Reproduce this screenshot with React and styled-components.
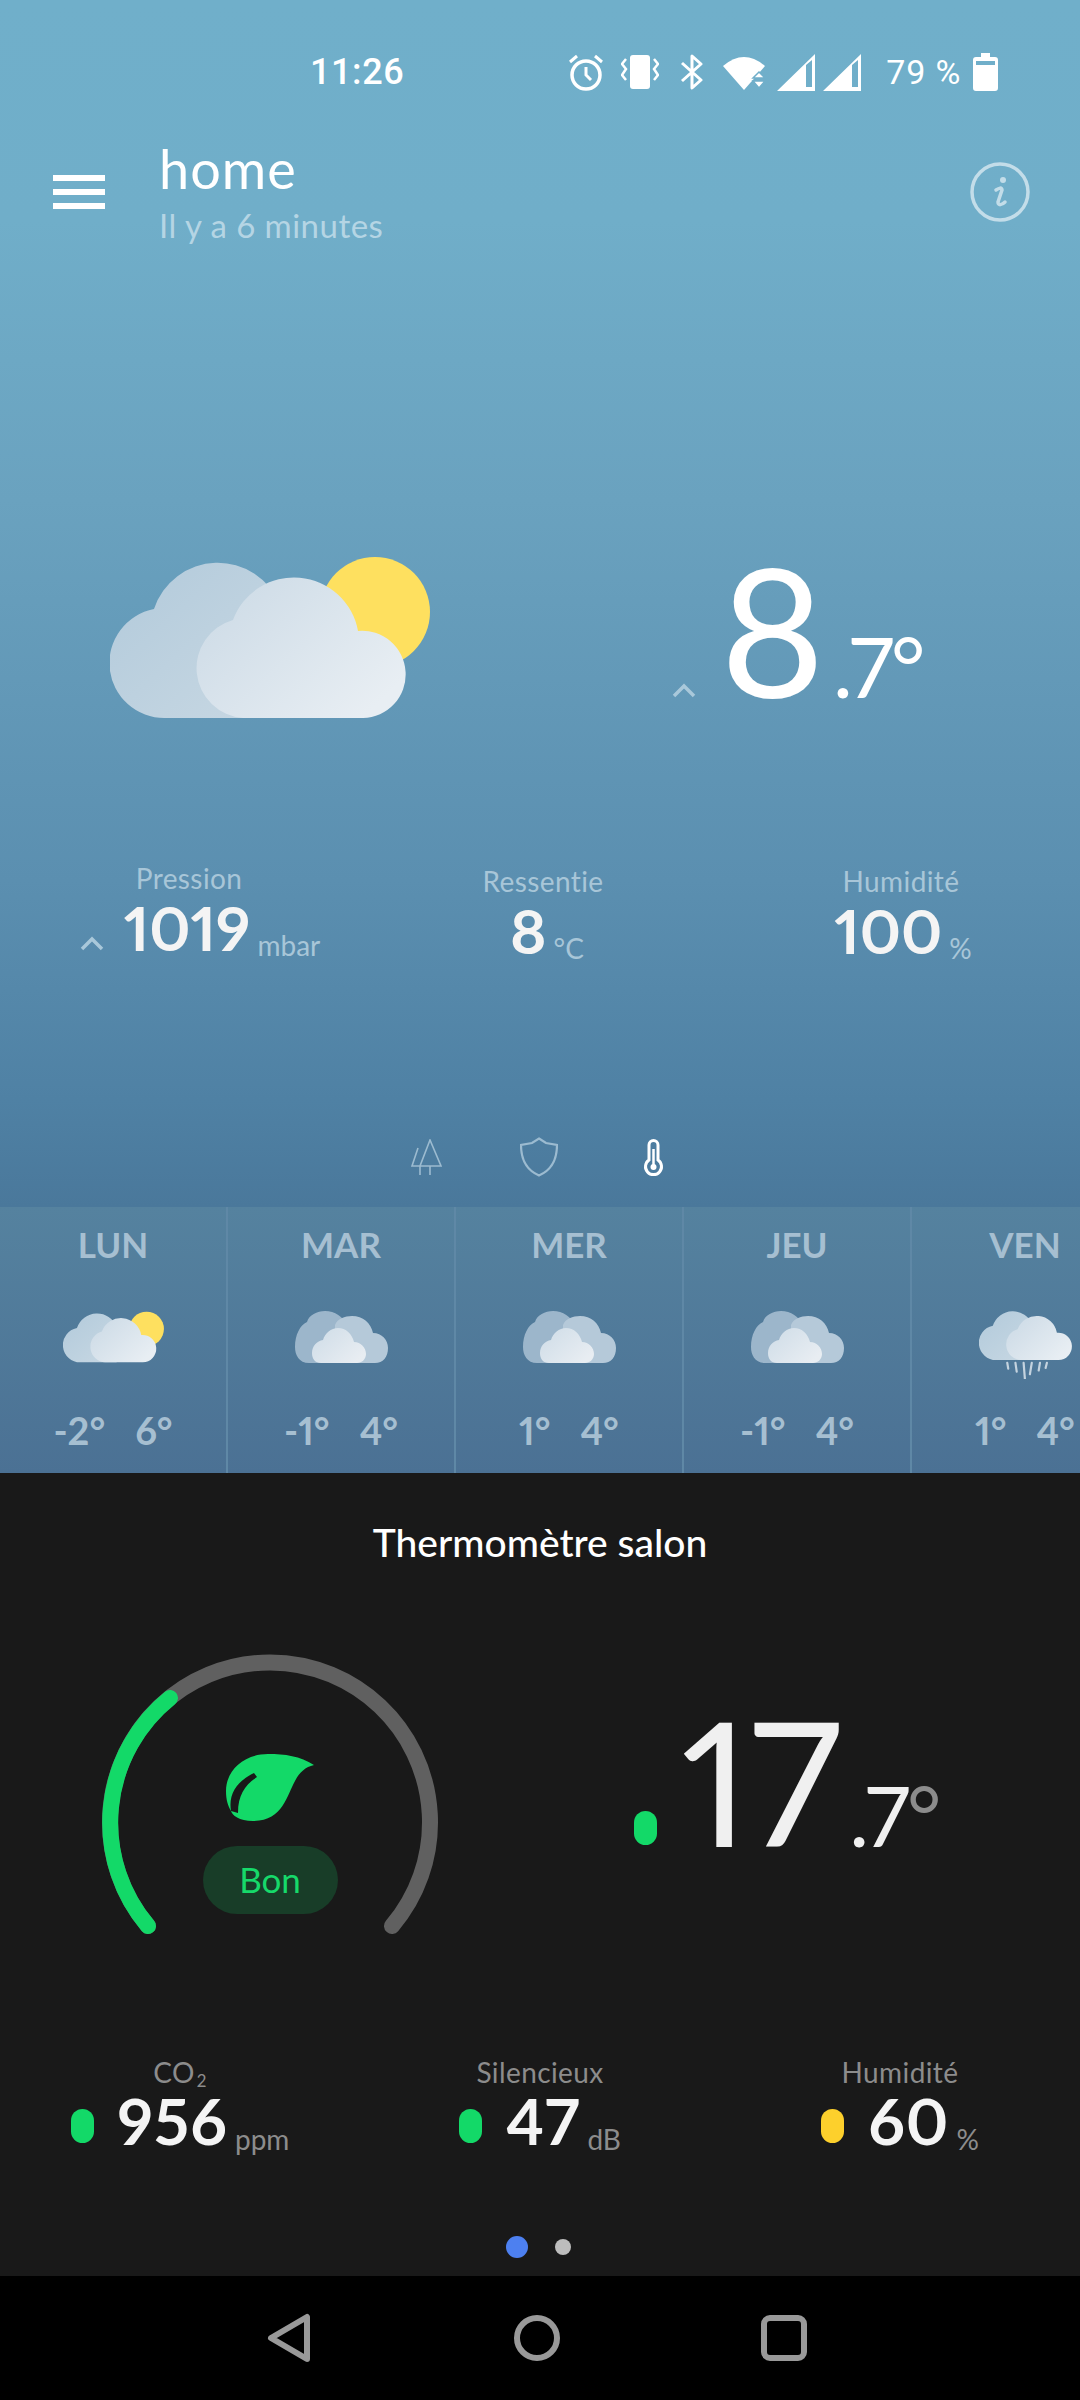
import React from 'react'
import styled, { createGlobalStyle } from 'styled-components'

const GlobalStyle = createGlobalStyle`
  html, body {
    margin: 0;
    padding: 0;
    background: #000;
  }
  body {
    font-family: "Lato", "Open Sans", sans-serif;
    font-variant-numeric: proportional-nums lining-nums;
  }
`

const Page = styled.div`
  width: 1080px;
  height: 2400px;
  display: flex;
  flex-direction: column;
  overflow: hidden;
`

const WeatherPanel = styled.section`
  height: 1473px;
  display: flex;
  flex-direction: column;
  color: #fff;
  background: linear-gradient(180deg, #70afca 0, #70aec9 220px, #6aa2bf 500px, #5b8fb0 880px, #4f81a4 1100px, #4a789b 1207px);
`

const StatusBar = styled.div`
  height: 76px;
  padding-top: 34px;
  display: flex;
  align-items: center;
  font-family: "Roboto", sans-serif;
  font-variant-numeric: normal;
  font-weight: 400;
`

const Clock = styled.span`
  margin-left: 310px;
  font-size: 36px;
  font-weight: 500;
  letter-spacing: 0.6px;
`

const StatusIcons = styled.div`
  margin-left: 164px;
  display: flex;
  align-items: center;
`

const Glyph = styled.svg`
  display: block;
  flex: none;
  margin-left: ${props => props.$gap || 0}px;
`

const Battery = styled.span`
  margin-left: 25px;
  margin-right: 12px;
  font-size: 34px;
  letter-spacing: 0.8px;
`

const Header = styled.header`
  height: 130px;
  margin-top: 17px;
  padding: 0 50px 0 53px;
  display: flex;
  align-items: center;
`

const Burger = styled.div`
  width: 52px;
  display: flex;
  flex-direction: column;
  gap: 8px;
`

const BurgerBar = styled.span`
  height: 6px;
  background: #fff;
`

const TitleBlock = styled.div`
  flex: 1;
  margin-left: 54px;
`

const Title = styled.div`
  font-size: 54px;
  line-height: 60px;
  letter-spacing: 1px;
`

const Subtitle = styled.div`
  font-size: 33px;
  line-height: 40px;
  letter-spacing: 0.5px;
  margin-top: 6px;
  color: #b5d5e4;
`

const Hero = styled.div`
  height: 200px;
  margin-top: 298px;
  padding-left: 110px;
  display: flex;
  align-items: flex-start;
`

const HeroTemp = styled.div`
  margin-left: 242px;
  margin-top: -8px;
  display: flex;
  align-items: baseline;
  height: 164px;
`

const Caret = styled.svg`
  display: block;
  flex: none;
  margin-right: ${props => props.$gap}px;
`

const BigNumber = styled.span`
  font-size: ${props => props.$size}px;
  line-height: 164px;
  font-weight: 400;
  color: ${props => props.$color || '#fff'};
`

const SmallNumber = styled.span`
  font-size: 84px;
  line-height: 84px;
  font-weight: 400;
  letter-spacing: -3px;
  margin-left: ${props => props.$gap || 8}px;
  color: ${props => props.$color || '#fff'};
`

const Degree = styled.span`
  color: ${props => props.$color};
`

const StatsGrid = styled.div`
  display: grid;
  grid-template-columns: repeat(3, 1fr);
  height: ${props => props.$height}px;
  margin-top: ${props => props.$top}px;
  padding-left: ${props => props.$pad || 0}px;
`

const Stat = styled.div`
  display: flex;
  flex-direction: column;
  align-items: center;
`

const StatLabel = styled.div`
  font-size: 28px;
  line-height: 31px;
  letter-spacing: 0.4px;
  margin-left: ${props => props.$shift || 0}px;
  margin-top: ${props => props.$top || 0}px;
  color: ${props => props.$color};
`

const StatValue = styled.div`
  display: flex;
  align-items: baseline;
  margin-left: ${props => props.$shift || 0}px;
`

const StatNumber = styled.span`
  font-size: ${props => props.$size || 62}px;
  letter-spacing: ${props => props.$spacing || 0}px;
  line-height: 66px;
  font-weight: 700;
  color: #f4f4f4;
`

const StatUnit = styled.span`
  font-size: 28px;
  margin-left: 7px;
  transform: translateY(5px);
  color: ${props => props.$color};
`

const Sub = styled.span`
  font-size: 17px;
  line-height: 0;
  margin-left: 2px;
  vertical-align: -4px;
`

const Tabs = styled.div`
  height: 50px;
  margin-top: 159px;
  padding-left: 410px;
  display: flex;
  align-items: center;
  gap: 78px;
`

const Forecast = styled.div`
  margin-top: auto;
  height: 266px;
  display: flex;
  overflow: hidden;
  background: linear-gradient(180deg, #55829f, #4b7194);
`

const Day = styled.div`
  flex: none;
  width: 226px;
  margin-right: 2px;
  padding-top: 20px;
  box-sizing: border-box;
  display: flex;
  flex-direction: column;
  align-items: center;
  box-shadow: 2px 0 0 #5f88a6;
`

const DayName = styled.div`
  font-size: 35px;
  line-height: 34px;
  font-weight: 700;
  color: #a6bfd1;
`

const DayIcon = styled.div`
  height: 70px;
  margin-top: 50px;
`

const DayTemps = styled.div`
  margin-top: 29px;
  display: flex;
  gap: 30px;
  font-size: 38px;
  line-height: 40px;
  font-weight: 700;
  color: #a6bfd1;
`

const RoomPanel = styled.section`
  height: 803px;
  display: flex;
  flex-direction: column;
  background: #191919;
`

const RoomTitle = styled.div`
  margin-top: 45px;
  font-size: 39px;
  line-height: 48px;
  font-weight: 500;
  text-align: center;
  color: #fff;
`

const RoomRow = styled.div`
  margin-top: 80px;
  height: 290px;
  padding-left: 90px;
  display: flex;
`

const Gauge = styled.div`
  width: 360px;
  height: 290px;
  position: relative;
`

const GaugeCenter = styled.div`
  position: absolute;
  left: 0;
  right: 0;
  top: 107px;
  display: flex;
  flex-direction: column;
  align-items: center;
  gap: 25px;
`

const QualityPill = styled.div`
  width: 135px;
  height: 68px;
  border-radius: 34px;
  background: #183d28;
  color: #16d96a;
  font-size: 35px;
  line-height: 66px;
  text-align: center;
`

const RoomTemp = styled.div`
  margin-left: 184px;
  padding-top: 52px;
  display: flex;
  align-items: baseline;
  height: 164px;
`

const Dot = styled.span`
  flex: none;
  width: 23px;
  height: 34px;
  border-radius: 12px;
  margin-right: ${props => props.$gap}px;
  transform: translateY(-2px);
  background: ${props => props.$color};
`

const Pager = styled.div`
  height: 40px;
  margin-top: auto;
  margin-bottom: 9px;
  display: flex;
  align-items: center;
  justify-content: center;
  gap: 27px;
  padding-right: 4px;
`

const PagerDot = styled.span`
  width: ${props => props.$size}px;
  height: ${props => props.$size}px;
  border-radius: 50%;
  background: ${props => props.$color};
`

const NavBar = styled.nav`
  flex: 1;
  background: #000;
  padding-right: 6px;
  display: flex;
  align-items: center;
  justify-content: center;
  gap: 199px;
`

const days = [
  { name: 'LUN', low: '-2°', high: '6°', icon: 'sun' },
  { name: 'MAR', low: '-1°', high: '4°', icon: 'overcast' },
  { name: 'MER', low: '1°', high: '4°', icon: 'overcast' },
  { name: 'JEU', low: '-1°', high: '4°', icon: 'overcast' },
  { name: 'VEN', low: '1°', high: '4°', icon: 'rain' },
]

const CloudDefs = () => (
  <defs>
    <linearGradient id="cloudBack" x1="0" y1="0" x2="1" y2="1">
      <stop offset="0" stopColor="#b2cadb" />
      <stop offset="1" stopColor="#c8d8e3" />
    </linearGradient>
    <linearGradient id="cloudFront" x1="0" y1="0" x2="1" y2="0.7">
      <stop offset="0" stopColor="#cad9e5" />
      <stop offset="1" stopColor="#e8eef3" />
    </linearGradient>
  </defs>
)

const CloudShapes = () => (
  <>
    <path d="M55 163A55 55 0 0 1 44 54A67 67 0 0 1 170 50L170 163Z" fill="url(#cloudBack)" />
    <path d="M133 163A50 50 0 0 1 123 65A65 65 0 0 1 248 76A43.6 43.6 0 1 1 253 163Z" fill="url(#cloudFront)" />
  </>
)

const SunCloud = ({ width, height }) => (
  <svg width={width} height={height} viewBox="0 0 320 165" style={{ display: 'block' }}>
    <CloudDefs />
    <circle cx="265" cy="57" r="55" fill="#fee05f" />
    <CloudShapes />
  </svg>
)

const RainCloud = () => (
  <svg width="93" height="68" viewBox="0 7 296 216" style={{ display: 'block' }}>
    <CloudDefs />
    <CloudShapes />
    <g stroke="#c4d3df" strokeWidth="7" strokeLinecap="round">
      <path d="M90 172L93 190M116 172L120 200M142 172L146 222M168 172L162 208M194 172L190 196M216 172L212 188" />
    </g>
  </svg>
)

const OvercastCloud = () => (
  <svg width="93" height="52" viewBox="0 0 93 52" style={{ display: 'block' }}>
    <defs>
      <linearGradient id="ovFront" x1="0" y1="0" x2="1" y2="0.7">
        <stop offset="0" stopColor="#cedce7" />
        <stop offset="1" stopColor="#e8edf2" />
      </linearGradient>
    </defs>
    <path d="M14 52C4 52 0 44 0 36C0 24 5 14 12 11C14 4 22 0 30 0C40 0 48 6 52 14L52 52Z" fill="#9cb6cb" />
    <path d="M40 52L40 14C42 8 50 5 57 5C68 5 76 12 78 22C87 22 93 29 93 37C93 46 88 52 80 52Z" fill="#b5c9d9" />
    <path d="M26 52C20 52 17 48 17 42C17 35 22 30 28 29C30 22 36 17 43 17C51 17 57 23 59 31C66 31 71 37 71 43C71 48 67 52 62 52Z" fill="url(#ovFront)" />
  </svg>
)

const DayGlyph = ({ icon }) => {
  if (icon === 'sun') return <SunCloud width={101} height={52} />
  if (icon === 'rain') return <RainCloud />
  return <OvercastCloud />
}

const Chevron = ({ gap, color, width = 24 }) => (
  <Caret $gap={gap} width={width} height="15" viewBox="0 0 24 15">
    <path d="M2 13L12 3L22 13" fill="none" stroke={color} strokeWidth="3.5" />
  </Caret>
)

const Leaf = () => (
  <svg width="90" height="68" viewBox="0 0 90 68" style={{ display: 'block' }}>
    <path
      d="M89 12C75 3 60 1 43 1C18 1 1 18 1 38C1 47 3 53 6 58C7 62 14 68 28 68C58 68 62 42 70 28C74 20 80 14 89 12Z"
      fill="#13d968"
    />
    <path d="M6 58C3 40 13 28 29 20L32 24C20 32 13 42 13 60Z" fill="#191919" />
  </svg>
)

const App = () => {
  return (
    <Page>
      <GlobalStyle />
      <WeatherPanel>
        <StatusBar>
          <Clock>11:26</Clock>
          <StatusIcons>
            <Glyph width="36" height="38" viewBox="0 0 36 38" fill="none" stroke="#fff">
              <circle cx="18" cy="22" r="14" strokeWidth="3.5" />
              <path d="M18 14V22L23 27M2 9L9 3M27 3L34 9" strokeWidth="3" />
            </Glyph>
            <Glyph $gap={17} width="38" height="34" viewBox="0 0 38 34" fill="none" stroke="#fff">
              <rect x="9" y="0" width="20" height="34" rx="3" fill="#fff" stroke="none" />
              <path d="M5 4L1 9L5 14L1 20L5 25M33 4L37 9L33 14L37 20L33 25" strokeWidth="2.5" />
            </Glyph>
            <Glyph $gap={21} width="24" height="36" viewBox="0 0 24 36" fill="none" stroke="#fff">
              <path d="M2 9L21 26L12 34V2L21 10L2 27" strokeWidth="3" strokeLinejoin="round" />
            </Glyph>
            <Glyph $gap={19} width="42" height="35" viewBox="0 0 42 35" fill="#fff">
              <path d="M0 11Q21 -7 42 11L21 35Z" />
              <path d="M36 17L42 23H30Z M30 26H42L36 33Z" stroke="#70afca" strokeWidth="1.5" />
            </Glyph>
            <Glyph $gap={12} width="38" height="37" viewBox="0 0 38 37" fill="#fff">
              <path fillRule="evenodd" d="M38 0V37H0ZM29 11V33H35V6Z" />
            </Glyph>
            <Glyph $gap={8} width="38" height="37" viewBox="0 0 38 37" fill="#fff">
              <path fillRule="evenodd" d="M38 0V37H0ZM29 11V33H35V6Z" />
            </Glyph>
            <Battery>79 %</Battery>
            <Glyph width="25" height="38" viewBox="0 0 25 38" fill="#fff">
              <path fillRule="evenodd" d="M8 0H17V4H22Q25 4 25 7V35Q25 38 22 38H3Q0 38 0 35V7Q0 4 3 4H8ZM3 8V12H22V8Z" />
            </Glyph>
          </StatusIcons>
        </StatusBar>

        <Header>
          <Burger>
            <BurgerBar />
            <BurgerBar />
            <BurgerBar />
          </Burger>
          <TitleBlock>
            <Title>home</Title>
            <Subtitle>Il y a 6 minutes</Subtitle>
          </TitleBlock>
          <svg width="60" height="60" viewBox="0 0 60 60" fill="none" stroke="#c3dde9">
            <circle cx="30" cy="30" r="28" strokeWidth="3.5" />
            <circle cx="33" cy="18" r="3" fill="#c3dde9" stroke="none" />
            <path d="M26 28C29 26 32 25 32 28L28 40C28 44 32 43 35 40" strokeWidth="3.5" strokeLinecap="round" />
          </svg>
        </Header>

        <Hero>
          <SunCloud width={320} height={165} />
          <HeroTemp>
            <Chevron gap={24} color="#a9c8da" />
            <BigNumber $size={179}>8</BigNumber>
            <SmallNumber>.7°</SmallNumber>
          </HeroTemp>
        </Hero>

        <StatsGrid $top={108} $height={110} $pad={6}>
          <Stat>
            <StatLabel $shift={8} $color="#a8c6d8">Pression</StatLabel>
            <StatValue $shift={30}>
              <Chevron gap={20} color="#a9c8da" />
              <StatNumber>1019</StatNumber>
              <StatUnit $color="#a8c6d8">mbar</StatUnit>
            </StatValue>
          </Stat>
          <Stat>
            <StatLabel $top={3} $color="#a8c6d8">Ressentie</StatLabel>
            <StatValue $shift={8}>
              <StatNumber>8</StatNumber>
              <StatUnit $color="#a8c6d8">°C</StatUnit>
            </StatValue>
          </Stat>
          <Stat>
            <StatLabel $top={3} $color="#a8c6d8">Humidité</StatLabel>
            <StatValue $shift={4}>
              <StatNumber>100</StatNumber>
              <StatUnit $color="#a8c6d8">%</StatUnit>
            </StatValue>
          </Stat>
        </StatsGrid>

        <Tabs>
          <svg width="32" height="37" viewBox="0 0 32 37" fill="none" stroke="#9cbbd0" strokeWidth="1.6">
            <path d="M20 1L10 27H31ZM20 27V36M8 9L2 27H10M10 27V36" />
          </svg>
          <svg width="38" height="40" viewBox="0 0 38 40" fill="none" stroke="#9cbbd0" strokeWidth="2.2">
            <path d="M19 1.5L26 6L37 8C37 22 32 33 19 38.5C6 33 1 22 1 8L12 6Z" />
          </svg>
          <svg width="28" height="39" viewBox="-7 0 28 39" fill="none" stroke="#fff" strokeWidth="3">
            <path d="M6 22V7A4.5 4.5 0 0 1 15 7V22A8 8 0 1 1 6 22Z" />
            <path d="M10.5 11V29" strokeWidth="2.5" />
            <circle cx="10.5" cy="29" r="3" fill="#fff" stroke="none" />
          </svg>
        </Tabs>

        <Forecast>
          {days.map((day) => (
            <Day key={day.name}>
              <DayName>{day.name}</DayName>
              <DayIcon>
                <DayGlyph icon={day.icon} />
              </DayIcon>
              <DayTemps>
                <span>{day.low}</span>
                <span>{day.high}</span>
              </DayTemps>
            </Day>
          ))}
        </Forecast>
      </WeatherPanel>

      <RoomPanel>
        <RoomTitle>Thermomètre salon</RoomTitle>
        <RoomRow>
          <Gauge>
            <svg width="360" height="290" viewBox="0 0 360 290" fill="none" strokeWidth="16" strokeLinecap="round">
              <path d="M58 280A160 160 0 1 1 302 280" stroke="#606060" />
              <path d="M58 280A160 160 0 0 1 80 52" stroke="#13d968" />
            </svg>
            <GaugeCenter>
              <Leaf />
              <QualityPill>Bon</QualityPill>
            </GaugeCenter>
          </Gauge>
          <RoomTemp>
            <Dot $gap={24} $color="#13d968" />
            <BigNumber $size={173} $color="#f0f0f0">17</BigNumber>
            <SmallNumber $color="#f0f0f0">.7<Degree $color="#8c8c8c">°</Degree></SmallNumber>
          </RoomTemp>
        </RoomRow>

        <StatsGrid $top={121} $height={100}>
          <Stat>
            <StatLabel $color="#8c8c8c">CO<Sub>2</Sub></StatLabel>
            <StatValue>
              <Dot $gap={24} $color="#13d968" />
              <StatNumber $size={64} $spacing={1}>956</StatNumber>
              <StatUnit $color="#8c8c8c">ppm</StatUnit>
            </StatValue>
          </Stat>
          <Stat>
            <StatLabel $color="#8c8c8c">Silencieux</StatLabel>
            <StatValue>
              <Dot $gap={24} $color="#13d968" />
              <StatNumber $size={64} $spacing={1}>47</StatNumber>
              <StatUnit $color="#8c8c8c">dB</StatUnit>
            </StatValue>
          </Stat>
          <Stat>
            <StatLabel $color="#8c8c8c">Humidité</StatLabel>
            <StatValue>
              <Dot $gap={24} $color="#fdd02c" />
              <StatNumber $size={64} $spacing={1}>60</StatNumber>
              <StatUnit $color="#8c8c8c">%</StatUnit>
            </StatValue>
          </Stat>
        </StatsGrid>

        <Pager>
          <PagerDot $size={22} $color="#4d80f0" />
          <PagerDot $size={16} $color="#bdbdbd" />
        </Pager>
      </RoomPanel>

      <NavBar>
        <svg width="48" height="50" viewBox="0 0 48 50" fill="none" stroke="#999" strokeWidth="6" strokeLinejoin="round">
          <path d="M41 4V46L5 25Z" />
        </svg>
        <svg width="48" height="50" viewBox="0 0 48 50" fill="none" stroke="#999" strokeWidth="6">
          <circle cx="24" cy="25" r="20" />
        </svg>
        <svg width="48" height="50" viewBox="0 0 48 50" fill="none" stroke="#999" strokeWidth="6">
          <rect x="4" y="5" width="40" height="40" rx="6" />
        </svg>
      </NavBar>
    </Page>
  )
}

export default App
